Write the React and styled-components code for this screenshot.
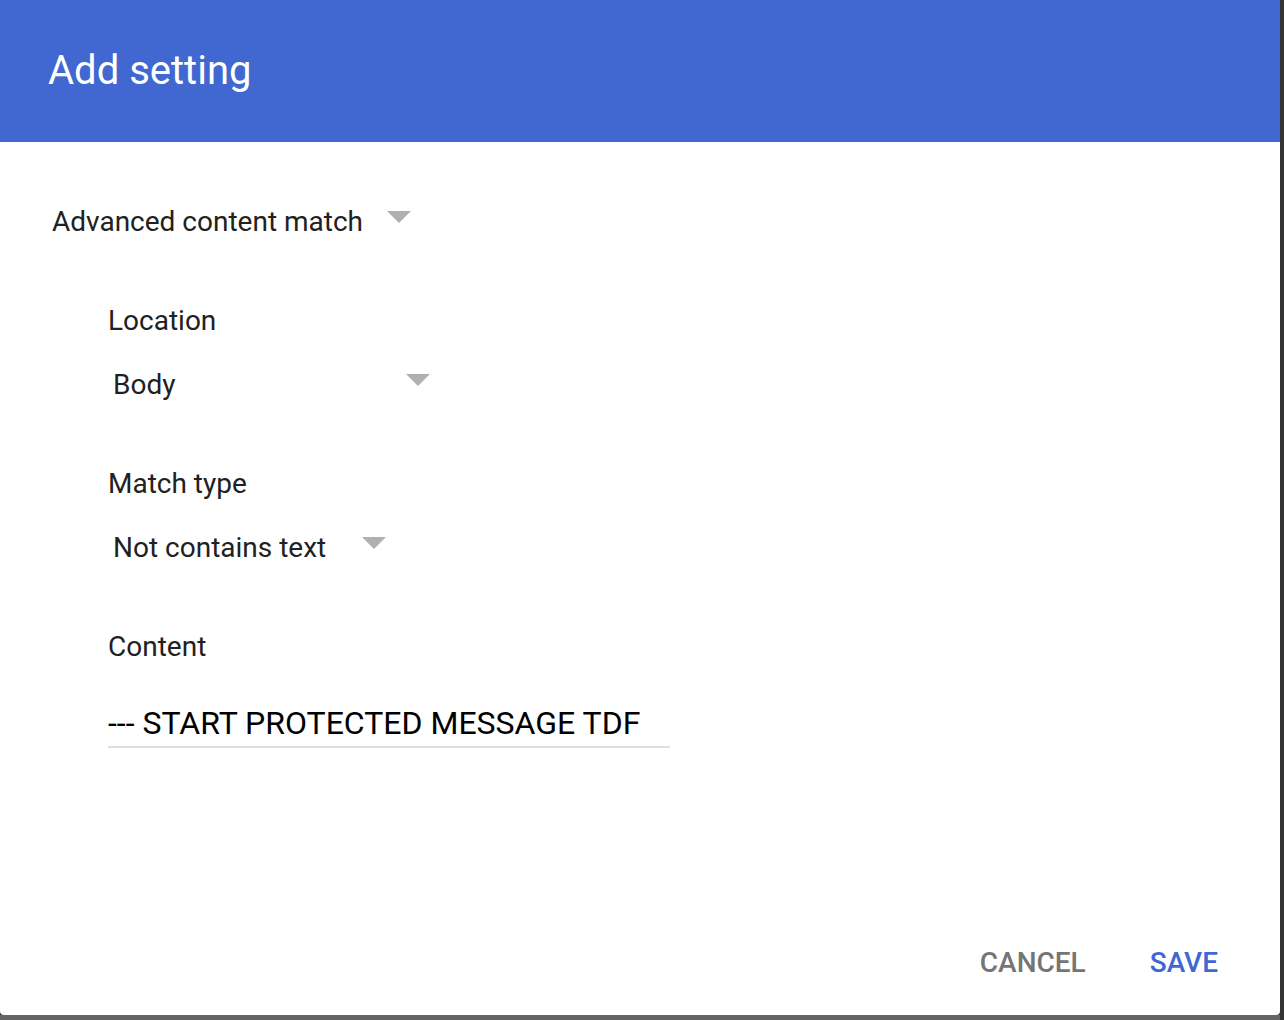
import React from "react";
import styled, { createGlobalStyle } from "styled-components";

const GlobalStyle = createGlobalStyle`
  body {
    margin: 0;
    font-family: Roboto, "Liberation Sans", sans-serif;
    background: #333333;
  }
  * {
    box-sizing: border-box;
  }
`;

function Dropdown({ value, width }) {
  return (
    <Select $width={width}>
      <SelectValue>{value}</SelectValue>
      <Arrow />
    </Select>
  );
}

function App() {
  return (
    <>
      <GlobalStyle />
      <Page>
        <Column>
          <Dialog>
            <Header>
              <Title>Add setting</Title>
            </Header>
            <Body>
              <Dropdown value="Advanced content match" width={359} />
              <Fields>
                <Field>
                  <Label>Location</Label>
                  <Indent>
                    <Dropdown value="Body" width={317} />
                  </Indent>
                </Field>
                <Field>
                  <Label>Match type</Label>
                  <Indent>
                    <Dropdown value="Not contains text" width={273} />
                  </Indent>
                </Field>
                <Field>
                  <Label>Content</Label>
                  <Input>--- START PROTECTED MESSAGE TDF</Input>
                </Field>
              </Fields>
            </Body>
            <Footer>
              <Button>CANCEL</Button>
              <Button $primary>SAVE</Button>
            </Footer>
          </Dialog>
          <BottomStrip />
        </Column>
        <SideStrip />
      </Page>
    </>
  );
}

export default App;

const Page = styled.div`
  display: flex;
  height: 1020px;
  overflow: hidden;
`;

const Column = styled.div`
  width: 1280px;
  display: flex;
  flex-direction: column;
`;

const SideStrip = styled.div`
  flex: 1;
  background: #333333;
`;

const BottomStrip = styled.div`
  flex: 1;
  background: #646464;
`;

const Dialog = styled.div`
  height: 1015px;
  background: #fff;
  border-radius: 0 0 4px 4px;
  display: flex;
  flex-direction: column;
`;

const Header = styled.div`
  height: 142px;
  background: #4068d0;
  padding: 0 0 1px 48px;
  display: flex;
  align-items: center;
`;

const Title = styled.h1`
  margin: 0;
  font-size: 40px;
  font-weight: 400;
  line-height: 48px;
  color: #fff;
`;

const Body = styled.div`
  padding: 64px 0 0 52px;
`;

const Fields = styled.div`
  margin-left: 56px;
  display: flex;
  flex-direction: column;
`;

const Field = styled.div`
  margin-top: 67px;
  display: flex;
  flex-direction: column;
`;

const Label = styled.div`
  font-size: 28px;
  line-height: 32px;
  color: #212121;
`;

const Indent = styled.div`
  margin-top: 32px;
  padding-left: 5px;
`;

const Select = styled.div`
  width: ${(p) => p.$width}px;
  display: flex;
  justify-content: space-between;
  align-items: flex-start;
`;

const SelectValue = styled.span`
  font-size: 28px;
  line-height: 32px;
  color: #212121;
  white-space: nowrap;
`;

const Arrow = styled.span`
  margin-top: 5px;
  width: 0;
  height: 0;
  border-left: 12px solid transparent;
  border-right: 12px solid transparent;
  border-top: 12px solid #b0b0b0;
`;

const Input = styled.div`
  margin-top: 40px;
  width: 562px;
  font-size: 32px;
  line-height: 40px;
  color: #000;
  padding-bottom: 3px;
  border-bottom: 2px solid #e0e0e0;
  white-space: nowrap;
`;

const Footer = styled.div`
  margin-top: auto;
  padding: 0 62px 36px 0;
  display: flex;
  justify-content: flex-end;
  gap: 64px;
`;

const Button = styled.span`
  font-size: 28px;
  line-height: 32px;
  font-weight: 500;
  color: ${(p) => (p.$primary ? "#3f68d4" : "#757575")};
  cursor: pointer;
`;
